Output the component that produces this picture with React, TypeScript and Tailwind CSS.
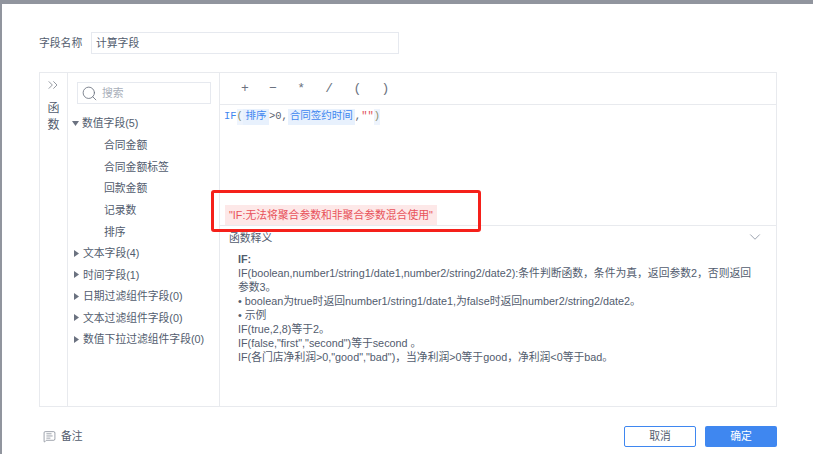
import { ChevronDown, ChevronsRight, MessageSquareText, Search } from "lucide-react";

const font = "font-['Liberation_Sans','Noto_Sans_CJK_SC',sans-serif]";

const numberFields = ["合同金额", "合同金额标签", "回款金额", "记录数", "排序"];
const otherGroups = ["文本字段(4)", "时间字段(1)", "日期过滤组件字段(0)", "文本过滤组件字段(0)", "数值下拉过滤组件字段(0)"];
const operators = ["+", "−", "*", "/", "(", ")"];

function Caret({ open = false }: { open?: boolean }) {
    return (
        <svg width="7" height="7" viewBox="0 0 7 7" className="mr-[3px] shrink-0">
            {open ? <path d="M0 1h7L3.5 6z" fill="#6b7280" /> : <path d="M1 0l5 3.5L1 7z" fill="#6b7280" />}
        </svg>
    );
}

export default function App() {
    return (
        <main className={`relative h-[454px] w-[813px] overflow-hidden bg-[#91959e] pl-[2px] pt-[4px] text-[10.8px] text-[#525c6e] ${font}`}>
            <div className="h-full w-full bg-white pl-[37px] pr-[36px] pt-[28px]">
                <div className="flex h-[22px] items-center">
                    <span className="w-[52px]">字段名称</span>
                    <div className="flex h-[22px] w-[308px] items-center border border-[#e6e9ef] pl-[4px]">计算字段</div>
                </div>

                <div className="mt-[18px] flex h-[335px] border border-[#e8eaee]">
                    <div className="flex w-[28px] shrink-0 flex-col items-center border-r border-[#e8eaee] pt-[5px]">
                        <ChevronsRight size={16} strokeWidth={1} className="-ml-[2px] -mt-[1px] mb-[-2px] text-[#5f6673]" />
                        <span className="mt-[9px] text-xs leading-[17px]">函</span>
                        <span className="text-xs leading-[17px]">数</span>
                    </div>

                    <div className="w-[152px] shrink-0 border-r border-[#e8eaee] pt-[9px]">
                        <div className="ml-[9px] flex h-[22px] w-[134px] items-center border border-[#e6e9ef] pl-[3px] text-[#a9afba]">
                            <Search size={17} strokeWidth={1.2} className="mr-[4px] text-[#6b7280]" />
                            搜索
                        </div>
                        <div className="mt-[9px] flex h-[21.5px] items-center pl-[4px] leading-none">
                            <Caret open />
                            <span>数值字段(5)</span>
                        </div>
                        {numberFields.map((name) => (
                            <div key={name} className="flex h-[21.6px] items-center pl-[36px]">
                                {name}
                            </div>
                        ))}
                        {otherGroups.map((name) => (
                            <div key={name} className="flex h-[21.5px] items-center pl-[5px]">
                                <Caret />
                                <span className="whitespace-nowrap">{name}</span>
                            </div>
                        ))}
                    </div>

                    <div className="flex min-w-0 flex-1 flex-col">
                        <div className="flex h-[32px] shrink-0 items-center border-b border-[#e8eaee] pl-[15px] text-[13px] text-[#6b7280]">
                            {operators.map((op) => (
                                <span key={op} className="w-[28.1px] pl-[6px] font-['Liberation_Mono',monospace]">
                                    {op}
                                </span>
                            ))}
                        </div>

                        <div className="relative h-[121px] shrink-0 border-b border-[#e8eaee] pl-[4px] pt-[4px]">
                            <div className="flex h-[16px] items-center whitespace-nowrap font-['Liberation_Mono','Noto_Sans_CJK_SC',monospace] text-[10.5px] text-[#5c6470]">
                                <span className="text-[#3f87f0]">IF</span>
                                <span className="bg-[#eef4fd] text-[#8a8f6a]">(</span>
                                <span className="bg-[#e8f1fd] px-[2.5px] text-[#3f87f0]">排序</span>
                                <span>&gt;0,</span>
                                <span className="bg-[#e8f1fd] px-[2px] text-[#3f87f0]">合同签约时间</span>
                                <span>,</span>
                                <span className="text-[#e0525a]">""</span>
                                <span className="bg-[#eef4fd] text-[#8a8f6a]">)</span>
                            </div>
                            <div className="absolute bottom-0 left-[5px] flex h-[20px] w-[212px] items-center whitespace-nowrap bg-[#fde8e8] pl-[4px] text-[#e8525a]">
                                "IF:无法将聚合参数和非聚合参数混合使用"
                            </div>
                        </div>

                        <div className="relative min-h-0 flex-1">
                            <div className="pl-[9px] pt-[5px] leading-[14px]">函数释义</div>
                            <ChevronDown size={18} strokeWidth={1} className="absolute right-[12px] top-[2px] text-[#7b8494]" />
                            <div className="mt-[7px] w-[537px] pl-[18px] leading-[14px]">
                                <p className="font-bold">IF:</p>
                                <p>IF(boolean,number1/string1/date1,number2/string2/date2):条件判断函数，条件为真，返回参数2，否则返回参数3。</p>
                                <p>• boolean为true时返回number1/string1/date1,为false时返回number2/string2/date2。</p>
                                <p>• 示例</p>
                                <p>IF(true,2,8)等于2。</p>
                                <p>IF(false,"first","second")等于second 。</p>
                                <p>IF(各门店净利润&gt;0,"good","bad")，当净利润&gt;0等于good，净利润&lt;0等于bad。</p>
                            </div>
                        </div>
                    </div>
                </div>

                <div className="mt-[19px] flex h-[21px] items-center">
                    <MessageSquareText size={13} strokeWidth={1.2} className="ml-[4px] mr-[5px] text-[#6b7280]" />
                    <span>备注</span>
                    <button className="ml-auto h-[21px] w-[72px] rounded-[2px] border border-[#3f87f0] bg-white text-[#525c6e]">取消</button>
                    <button className="ml-[9px] h-[21px] w-[72px] rounded-[2px] bg-[#3f87f0] text-white">确定</button>
                </div>
            </div>

            <div className="absolute left-[211px] top-[190px] h-[42px] w-[270px] rounded-[3px] border-[3px] border-[#f5201a]" />
        </main>
    );
}
